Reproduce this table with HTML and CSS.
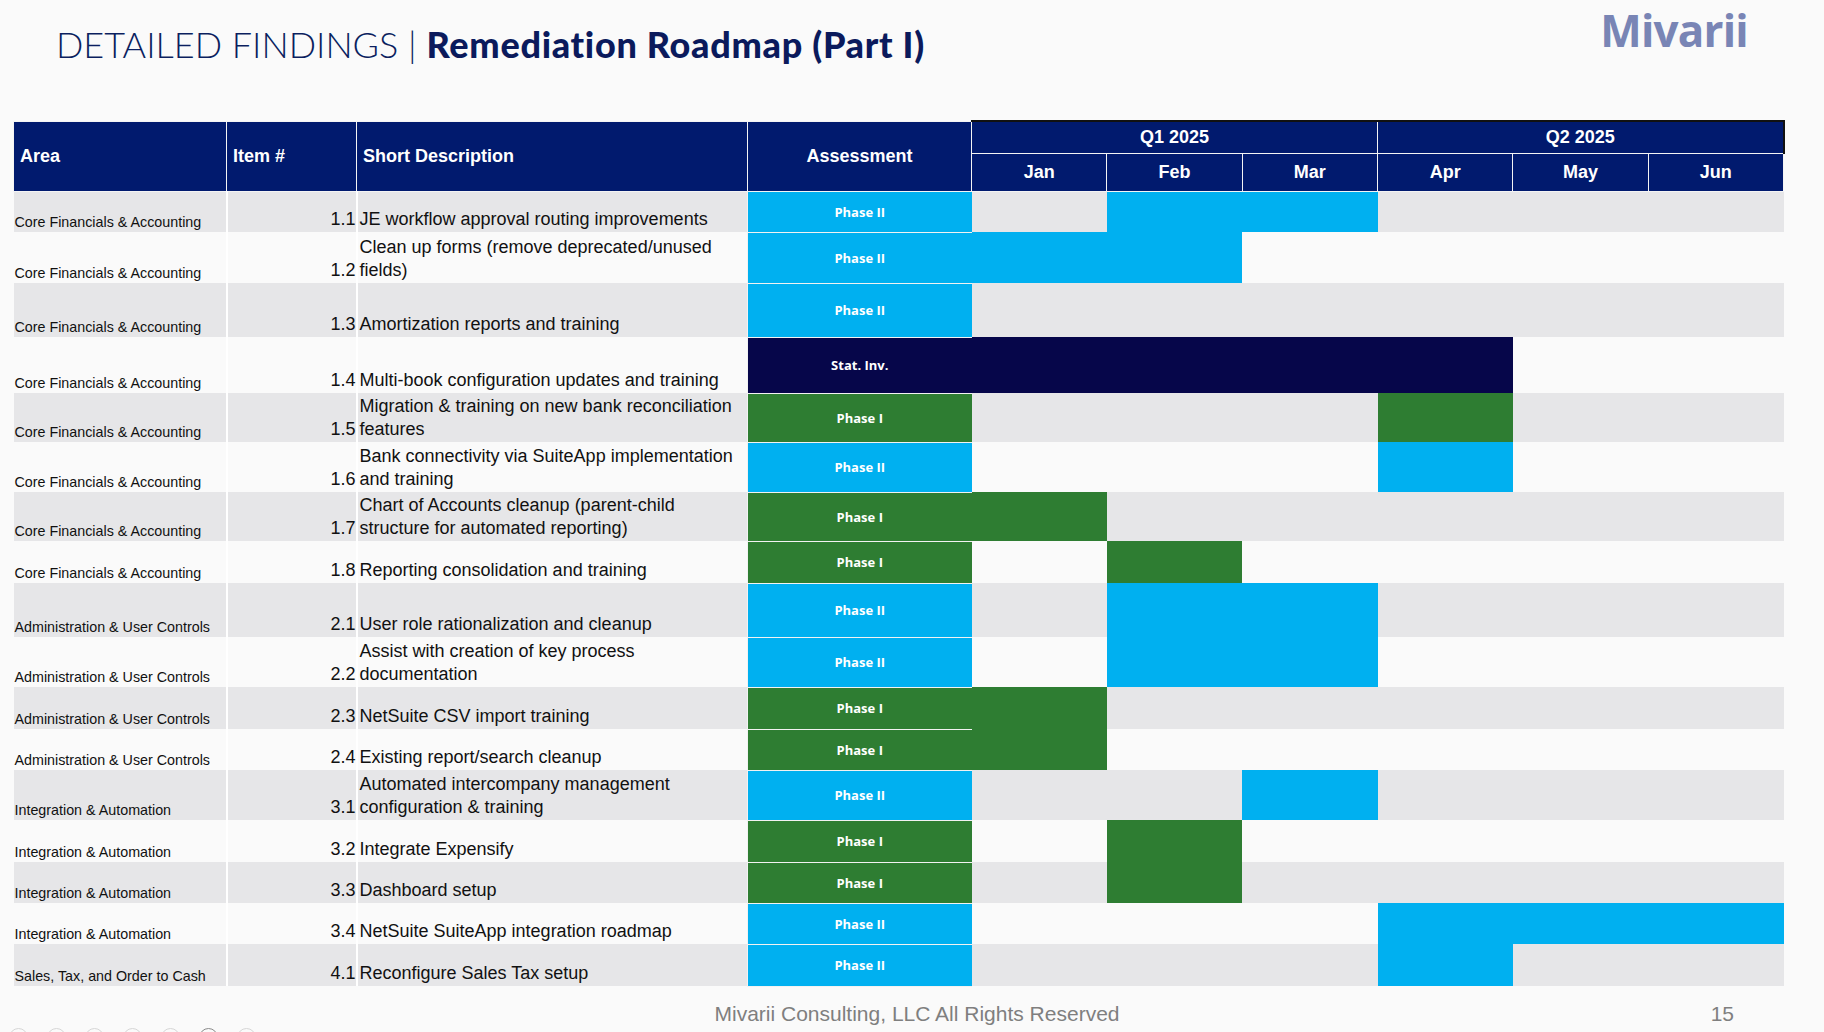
FILE: index.html
```html
<!DOCTYPE html>
<html lang="en">
<head>
<meta charset="utf-8">
<title>Remediation Roadmap (Part I)</title>
<link rel="stylesheet" href="styles.css">
</head>
<body>
<div class="slide">
  <header class="top">
    <h1 class="title"><span class="light">DETAILED FINDINGS</span> <span class="bar">|</span> <span class="bold">Remediation Roadmap (Part I)</span></h1>
    <div class="logo">Mivarii</div>
  </header>

  <table class="roadmap">
    <colgroup>
      <col class="c-area"><col class="c-item"><col class="c-desc"><col class="c-assess">
      <col class="c-m"><col class="c-m"><col class="c-m"><col class="c-m"><col class="c-m"><col class="c-m">
    </colgroup>
    <thead>
      <tr class="h1">
        <th rowspan="2" class="hl">Area</th>
        <th rowspan="2" class="hl">Item #</th>
        <th rowspan="2" class="hl">Short Description</th>
        <th rowspan="2" class="hc">Assessment</th>
        <th colspan="3" class="q">Q1 2025</th>
        <th colspan="3" class="q qlast">Q2 2025</th>
      </tr>
      <tr class="h2">
        <th class="m">Jan</th><th class="m">Feb</th><th class="m">Mar</th>
        <th class="m">Apr</th><th class="m">May</th><th class="m mlast">Jun</th>
      </tr>
    </thead>
    <tbody>
      <tr class="g r41">
        <td class="area">Core Financials &amp; Accounting</td><td class="item">1.1</td>
        <td class="desc">JE workflow approval routing improvements</td>
        <td class="as p2">Phase II</td>
        <td></td><td class="b2"></td><td class="b2"></td><td></td><td></td><td></td>
      </tr>
      <tr class="w r51">
        <td class="area">Core Financials &amp; Accounting</td><td class="item">1.2</td>
        <td class="desc">Clean up forms (remove deprecated/unused<br>fields)</td>
        <td class="as p2">Phase II</td>
        <td class="b2"></td><td class="b2"></td><td></td><td></td><td></td><td></td>
      </tr>
      <tr class="g r54">
        <td class="area">Core Financials &amp; Accounting</td><td class="item">1.3</td>
        <td class="desc">Amortization reports and training</td>
        <td class="as p2">Phase II</td>
        <td></td><td></td><td></td><td></td><td></td><td></td>
      </tr>
      <tr class="w r56">
        <td class="area">Core Financials &amp; Accounting</td><td class="item">1.4</td>
        <td class="desc">Multi-book configuration updates and training</td>
        <td class="as st">Stat. Inv.</td>
        <td class="bs"></td><td class="bs"></td><td class="bs"></td><td class="bs"></td><td></td><td></td>
      </tr>
      <tr class="g r49">
        <td class="area">Core Financials &amp; Accounting</td><td class="item">1.5</td>
        <td class="desc">Migration &amp; training on new bank reconciliation<br>features</td>
        <td class="as p1">Phase I</td>
        <td></td><td></td><td></td><td class="b1"></td><td></td><td></td>
      </tr>
      <tr class="w r50">
        <td class="area">Core Financials &amp; Accounting</td><td class="item">1.6</td>
        <td class="desc">Bank connectivity via SuiteApp implementation<br>and training</td>
        <td class="as p2">Phase II</td>
        <td></td><td></td><td></td><td class="b2"></td><td></td><td></td>
      </tr>
      <tr class="g r49">
        <td class="area">Core Financials &amp; Accounting</td><td class="item">1.7</td>
        <td class="desc">Chart of Accounts cleanup (parent-child<br>structure for automated reporting)</td>
        <td class="as p1">Phase I</td>
        <td class="b1"></td><td></td><td></td><td></td><td></td><td></td>
      </tr>
      <tr class="w r42">
        <td class="area">Core Financials &amp; Accounting</td><td class="item">1.8</td>
        <td class="desc">Reporting consolidation and training</td>
        <td class="as p1">Phase I</td>
        <td></td><td class="b1"></td><td></td><td></td><td></td><td></td>
      </tr>
      <tr class="g r54">
        <td class="area">Administration &amp; User Controls</td><td class="item">2.1</td>
        <td class="desc">User role rationalization and cleanup</td>
        <td class="as p2">Phase II</td>
        <td></td><td class="b2"></td><td class="b2"></td><td></td><td></td><td></td>
      </tr>
      <tr class="w r50">
        <td class="area">Administration &amp; User Controls</td><td class="item">2.2</td>
        <td class="desc">Assist with creation of key process<br>documentation</td>
        <td class="as p2">Phase II</td>
        <td></td><td class="b2"></td><td class="b2"></td><td></td><td></td><td></td>
      </tr>
      <tr class="g r42">
        <td class="area">Administration &amp; User Controls</td><td class="item">2.3</td>
        <td class="desc">NetSuite CSV import training</td>
        <td class="as p1">Phase I</td>
        <td class="b1"></td><td></td><td></td><td></td><td></td><td></td>
      </tr>
      <tr class="w r41">
        <td class="area">Administration &amp; User Controls</td><td class="item">2.4</td>
        <td class="desc">Existing report/search cleanup</td>
        <td class="as p1">Phase I</td>
        <td class="b1"></td><td></td><td></td><td></td><td></td><td></td>
      </tr>
      <tr class="g r50">
        <td class="area">Integration &amp; Automation</td><td class="item">3.1</td>
        <td class="desc">Automated intercompany management<br>configuration &amp; training</td>
        <td class="as p2">Phase II</td>
        <td></td><td></td><td class="b2"></td><td></td><td></td><td></td>
      </tr>
      <tr class="w r42">
        <td class="area">Integration &amp; Automation</td><td class="item">3.2</td>
        <td class="desc">Integrate Expensify</td>
        <td class="as p1">Phase I</td>
        <td></td><td class="b1"></td><td></td><td></td><td></td><td></td>
      </tr>
      <tr class="g r41">
        <td class="area">Integration &amp; Automation</td><td class="item">3.3</td>
        <td class="desc">Dashboard setup</td>
        <td class="as p1">Phase I</td>
        <td></td><td class="b1"></td><td></td><td></td><td></td><td></td>
      </tr>
      <tr class="w r41">
        <td class="area">Integration &amp; Automation</td><td class="item">3.4</td>
        <td class="desc">NetSuite SuiteApp integration roadmap</td>
        <td class="as p2">Phase II</td>
        <td></td><td></td><td></td><td class="b2"></td><td class="b2"></td><td class="b2"></td>
      </tr>
      <tr class="g r42">
        <td class="area">Sales, Tax, and Order to Cash</td><td class="item">4.1</td>
        <td class="desc">Reconfigure Sales Tax setup</td>
        <td class="as p2">Phase II</td>
        <td></td><td></td><td></td><td class="b2"></td><td></td><td></td>
      </tr>
    </tbody>
  </table>

  <footer class="foot">
    <span class="copy">Mivarii Consulting, LLC All Rights Reserved</span>
    <span class="page">15</span>
  </footer>

  <div class="dots">
    <span class="dot"></span><span class="dot"></span><span class="dot"></span><span class="dot"></span>
    <span class="dot"></span><span class="dot dark"></span><span class="dot"></span>
  </div>
</div>
</body>
</html>
```

FILE: styles.css
```css
* { box-sizing: border-box; }
html, body { margin: 0; padding: 0; }
body {
  background: #fafafa;
  font-family: "Liberation Sans", Arial, sans-serif;
  color: #111;
  width: 1824px;
  height: 1032px;
  overflow: hidden;
}
.slide {
  position: relative;
  width: 1824px;
  height: 1032px;
}
.top {
  height: 120px;
  display: flex;
  justify-content: space-between;
  align-items: flex-start;
  padding: 0 76px 0 56px;
}
.title {
  margin: 23px 0 0;
  font-family: Lato, "Open Sans", sans-serif;
  font-size: 36px;
  line-height: 42px;
  color: #0b1f5f;
  font-weight: 300;
  white-space: nowrap;
}
.title .light { font-weight: 300; }
.title .bar { font-weight: 300; }
.title .bold { font-weight: 900; color: #0b1a5c; letter-spacing: 0.7px; }
.logo {
  margin-top: 4px;
  font-family: "Open Sans", sans-serif;
  font-weight: 700;
  font-size: 44px;
  line-height: 52px;
  color: #7985b5;
  letter-spacing: -0.8px;
}

.roadmap {
  margin-left: 13px;
  width: 1770px;
  table-layout: fixed;
  border-collapse: collapse;
}
.c-area { width: 213px; }
.c-item { width: 130px; }
.c-desc { width: 391px; }
.c-assess { width: 224px; }
.c-m { width: 135.33px; }

.roadmap th {
  background: #011a6e;
  color: #fff;
  font-weight: 700;
  font-size: 18px;
  padding: 0 6px;
  border: 1px solid #f4f4f4;
}
.roadmap .h1 th { height: 32px; }
.roadmap .h2 th { height: 38px; }
.roadmap th.hl { text-align: left; }
.roadmap th.hc { text-align: center; }
.roadmap th.q { text-align: center; border-top: 2px solid #111; }
.roadmap th.qlast { border-right: 2px solid #111; }
.roadmap th.m { text-align: center; }

.roadmap td {
  padding: 0;
  border: 0;
  vertical-align: bottom;
}
.roadmap tr.g td { background: #e6e6e8; }
.roadmap tr.w td { background: #fafafa; }

.r41 { height: 41px; }
.r42 { height: 42px; }
.r49 { height: 49px; }
.r50 { height: 50px; }
.r51 { height: 51px; }
.r54 { height: 54px; }
.r56 { height: 56px; }

.roadmap td.area {
  font-size: 14.3px;
  line-height: 18px;
  padding: 0 2px 1px 1px;
  border-right: 2px solid #fff;
  white-space: nowrap;
}
.roadmap td.item {
  font-size: 18px;
  line-height: 23px;
  text-align: right;
  padding: 0 0 1px 0;
  border-right: 2px solid #fff;
}
.roadmap td.desc {
  font-size: 18px;
  line-height: 23px;
  padding: 0 2px 1px 2px;
  white-space: nowrap;
}
.roadmap td.as {
  text-align: center;
  vertical-align: middle;
  color: #fff;
  font-weight: 700;
  font-size: 13px;
  font-family: "Open Sans", sans-serif;
  border-top: 1px solid #f2f2f2;
  border-bottom: 1px solid #f2f2f2;
  border-left: 1px solid #f2f2f2;
}
.roadmap tr td.p2, .roadmap tr td.b2 { background: #00b0f0; }
.roadmap tr td.p1, .roadmap tr td.b1 { background: #2e7d32; }
.roadmap tr td.st, .roadmap tr td.bs { background: #06064a; }

.foot {
  position: relative;
  height: 47px;
  margin-top: 4px;
  display: flex;
  justify-content: center;
  align-items: center;
  font-family: "Liberation Sans", sans-serif;
  font-size: 21px;
  color: #7f7f7f;
}
.copy { margin-left: 10px; }
.page {
  position: absolute;
  right: 90px;
  top: 11px;
}
.dots {
  position: absolute;
  left: 9px;
  top: 1028px;
  display: flex;
  gap: 19px;
}
.dot {
  width: 19px;
  height: 19px;
  border-radius: 50%;
  border: 1px solid #d6d6d6;
}
.dot.dark { border-color: #8a8a8a; }
```
